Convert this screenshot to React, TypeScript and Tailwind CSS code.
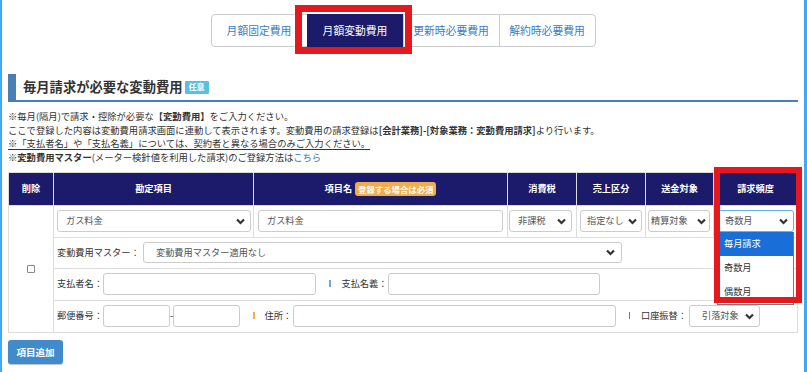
import React from "react";

const FONT = { fontFamily: '"Noto Sans CJK JP", "Noto Sans", sans-serif' };

function Chevron() {
  return (
    <svg width="9" height="7" viewBox="0 0 9 7" className="shrink-0">
      <polyline points="1,1.5 4.5,5 8,1.5" fill="none" stroke="#333" strokeWidth="2.2" strokeLinejoin="miter" />
    </svg>
  );
}

function Select({ text, cls = "", pl = "pl-[8px]", pr = "pr-[5px]", focused = false, h = "h-[22px]" }: { text: string; cls?: string; pl?: string; pr?: string; focused?: boolean; h?: string }) {
  return (
    <div
      className={`flex items-center justify-between ${h} border ${focused ? "border-[#66afe9]" : "border-[#ccc]"} rounded-[3px] bg-white ${pl} ${pr} text-[#555] overflow-hidden whitespace-nowrap ${cls}`}
    >
      <span className="overflow-hidden">{text}</span>
      <Chevron />
    </div>
  );
}

function Input({ text = "", cls = "" }: { text?: string; cls?: string }) {
  return (
    <div className={`flex items-center h-[22px] border border-[#ccc] rounded-[3px] bg-white pl-[8px] text-[#555] ${cls}`}>
      {text}
    </div>
  );
}

function Sep({ color }: { color: string }) {
  return <span className={`inline-block w-[1.5px] h-[7px] ${color}`} />;
}

export default function App() {
  const tabs = ["月額固定費用", "月額変動費用", "更新時必要費用", "解約時必要費用"];
  return (
    <div className="relative flex w-[807px] h-[372px] bg-white overflow-hidden text-[9.2px] text-[#333]" style={FONT}>
      <div className="w-[2px] shrink-0 bg-[#3fa9f5]" />
      <div className="flex-1 flex flex-col px-[6px]">
        {/* tabs */}
        <div className="mt-[14px] flex justify-center">
          {tabs.map((t, i) => (
            <div
              key={t}
              className={`w-[97px] h-[33px] flex items-center justify-center text-[10.8px] border ${
                i === 1 ? "bg-[#1b1a6b] text-white border-[#1b1a6b]" : "bg-white text-[#3b7dc4] border-[#ccc]"
              } ${i === 0 ? "rounded-l-[4px]" : "-ml-px"} ${i === 3 ? "rounded-r-[4px]" : ""}`}
            >
              {t}
            </div>
          ))}
        </div>

        {/* heading */}
        <div className="mt-[27px] h-[28px] border-l-[8px] border-b-2 border-[#4a7fb4] flex items-center pl-[7px]">
          <span className="text-[13.3px] font-bold text-[#333]">毎月請求が必要な変動費用</span>
          <span className="ml-[2px] h-[13px] px-[4px] flex items-center bg-[#5bc0de] text-white text-[8px] font-bold rounded-[1px]">任意</span>
        </div>

        {/* notes */}
        <div className="mt-[8px] leading-[13.7px] text-[9.3px]">
          <div>
            ※毎月(隔月)で請求・控除が必要な<span className="font-bold">【変動費用】</span>をご入力ください。
          </div>
          <div>
            ここで登録した内容は変動費用請求画面に連動して表示されます。変動費用の請求登録は
            <span className="font-bold">[会計業務]-[対象業務：変動費用請求]</span>より行います。
          </div>
          <div>
            <span className="underline underline-offset-[2px] pr-[5px]">※「支払者名」や「支払名義」については、契約者と異なる場合のみご入力ください。</span>
          </div>
          <div>
            ※<span className="font-bold">変動費用マスター</span>(メーター検針値を利用した請求)のご登録方法は
            <span className="text-[#337ab7]">こちら</span>
          </div>
        </div>

        {/* table */}
        <table className="mt-[7px] w-[789px] table-fixed border-collapse">
          <colgroup>
            <col className="w-[45px]" />
            <col className="w-[200px]" />
            <col className="w-[254px]" />
            <col className="w-[69px]" />
            <col className="w-[69px]" />
            <col className="w-[68px]" />
            <col className="w-[84px]" />
          </colgroup>
          <thead>
            <tr className="h-[33px] bg-[#1b1a6b] text-white">
              <th className="border border-[#ddd] font-bold">削除</th>
              <th className="border border-[#ddd] font-bold">勘定項目</th>
              <th className="border border-[#ddd] font-bold">
                <span className="inline-flex items-center">
                  項目名
                  <span className="ml-[3px] px-[3px] h-[14px] flex items-center rounded-[3px] bg-[#f0ad4e] text-[8.4px] text-white font-bold">登録する場合は必須</span>
                </span>
              </th>
              <th className="border border-[#ddd] font-bold">消費税</th>
              <th className="border border-[#ddd] font-bold">売上区分</th>
              <th className="border border-[#ddd] font-bold">送金対象</th>
              <th className="border border-[#ddd] font-bold">請求頻度</th>
            </tr>
          </thead>
          <tbody>
            <tr className="h-[32px]">
              <td rowSpan={4} className="border border-[#ddd] align-middle">
                <div className="mx-auto w-[8px] h-[8px] border border-[#888] rounded-[1px] bg-white" />
              </td>
              <td className="border border-[#ddd] pl-[3px] pr-[2px]">
                <Select text="ガス料金" />
              </td>
              <td className="border border-[#ddd] px-[4px]">
                <Input text="ガス料金" />
              </td>
              <td className="border border-[#ddd] pl-[1px] pr-[4px]">
                <Select text="非課税" />
              </td>
              <td className="border border-[#ddd] px-[3px]">
                <Select text="指定なし" pl="pl-[6px]" pr="pr-[4px]" />
              </td>
              <td className="border border-[#ddd] pl-[2px] pr-[3px]">
                <Select text="精算対象" pl="pl-[2px]" pr="pr-[3px]" />
              </td>
              <td className="border border-[#ddd] px-[3px]">
                <div className="relative">
                  <Select text="奇数月" focused pl="pl-[7px]" pr="pr-[5px]" />
                  <div className="absolute left-0 top-full w-full z-10 bg-white border border-[#777] border-t-0 text-[#333]">
                    <div className="h-[24px] flex items-center pl-[6px] bg-[#1a6ed8] text-white">毎月請求</div>
                    <div className="h-[24px] flex items-center pl-[6px]">奇数月</div>
                    <div className="h-[24px] flex items-center pl-[6px]">偶数月</div>
                  </div>
                </div>
              </td>
            </tr>
            <tr className="h-[31px]">
              <td colSpan={6} className="border border-[#ddd] px-[3px]">
                <div className="flex items-center">
                  <span className="w-[86px] shrink-0 whitespace-nowrap">変動費用マスター：</span>
                  <Select text="変動費用マスター適用なし" cls="w-[479px]" pl="pl-[12px]" pr="pr-[6px]" h="h-[21px]" />
                </div>
              </td>
            </tr>
            <tr className="h-[32px]">
              <td colSpan={6} className="border border-[#ddd] px-[3px]">
                <div className="flex items-center">
                  <span className="w-[46px] shrink-0 whitespace-nowrap">支払者名：</span>
                  <Input cls="w-[213px]" />
                  <span className="ml-[13px]"><Sep color="bg-[#6fa8dc]" /></span>
                  <span className="ml-[11px] w-[46px] shrink-0 whitespace-nowrap">支払名義：</span>
                  <Input cls="w-[212px]" />
                </div>
              </td>
            </tr>
            <tr className="h-[32px]">
              <td colSpan={6} className="border border-[#ddd] px-[3px]">
                <div className="flex items-center">
                  <span className="w-[46px] shrink-0 whitespace-nowrap">郵便番号：</span>
                  <Input cls="w-[67px]" />
                  <span className="w-[3px] text-center">-</span>
                  <Input cls="w-[67px]" />
                  <span className="ml-[13px]"><Sep color="bg-[#f0ad4e]" /></span>
                  <span className="ml-[10px] w-[28px] shrink-0 whitespace-nowrap">住所：</span>
                  <Input cls="w-[323px]" />
                  <span className="ml-[13px]"><Sep color="bg-[#d9534f]" /></span>
                  <span className="ml-[11px] w-[48px] shrink-0 whitespace-nowrap">口座振替：</span>
                  <Select text="引落対象" cls="w-[71px]" pl="pl-[12px]" pr="pr-[5px]" />
                </div>
              </td>
            </tr>
          </tbody>
        </table>

        <div className="mt-[7px]">
          <button className="w-[55px] h-[24px] bg-[#428bca] text-white font-bold text-[9.5px] rounded-[3px] shadow-[0_1px_1px_rgba(0,0,0,0.25)]">
            項目追加
          </button>
        </div>
      </div>
      <div className="w-[4px] shrink-0 bg-[#3fa9f5]" />

      {/* red highlight boxes */}
      <div className="absolute left-[295px] top-[5px] w-[117px] h-[49px] border-[7px] border-[#e4191f] pointer-events-none" />
      <div className="absolute left-[714px] top-[167px] w-[88px] h-[136px] border-[6px] border-[#e4191f] pointer-events-none z-20" />
    </div>
  );
}
